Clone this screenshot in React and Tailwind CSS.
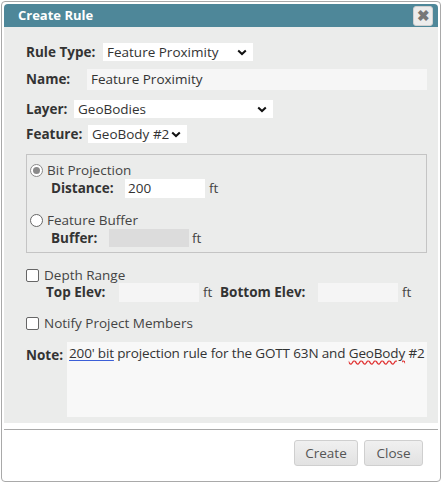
import React from 'react'

const Chevron = ({ className }) => (
  <svg width="10" height="7" viewBox="0 0 10 7" className={className}>
    <path d="M1.2 1.4 L5 5 L8.8 1.4" fill="none" stroke="#111" strokeWidth="2" />
  </svg>
)

function Select({ value, className }) {
  return (
    <div className={`flex items-center justify-between bg-white pl-[4px] pr-[6px] text-[#333] ${className}`}>
      <span>{value}</span>
      <Chevron />
    </div>
  )
}

const Radio = ({ checked }) =>
  checked ? (
    <span className="flex h-[13px] w-[13px] items-center justify-center rounded-full border border-[#8a8a8a] bg-white">
      <span className="h-[7px] w-[7px] rounded-full bg-[#8a8a8a]" />
    </span>
  ) : (
    <span className="h-[13px] w-[13px] rounded-full border border-[#666] bg-white" />
  )

const Checkbox = () => <span className="h-[13px] w-[13px] rounded-[2px] border border-[#666] bg-white" />

export default function App() {
  return (
    <div className="h-[482px] w-[442px] bg-white pl-px pt-px" style={{ fontFamily: '"Open Sans", "Liberation Sans", sans-serif' }}>
      <div className="flex h-[481px] w-[440px] flex-col rounded-[4px] border border-[#a9a9a9] bg-white p-[2px] text-[13.5px] text-[#444]">
        {/* title bar */}
        <div className="flex h-[23px] items-center justify-between rounded-t-[4px] bg-[#4e8799] pl-[14px] pr-[5px]">
          <span className="text-[13px] font-bold text-white">Create Rule</span>
          <span className="flex h-[20px] w-[20px] items-center justify-center rounded-[3px] border border-[#d0d0d0] bg-[#ececec] text-[15px] font-bold leading-none text-[#777]">
            ✖
          </span>
        </div>

        {/* content */}
        <div className="flex h-[396px] flex-col bg-[#ebeceb] pl-[22px] pr-[11px] pt-[16px]">
          <div className="flex h-[18px] items-center">
            <span className="w-[77px] font-bold text-[#333]">Rule Type:</span>
            <Select value="Feature Proximity" className="h-[18px] w-[150px]" />
          </div>

          <div className="mt-[8px] flex h-[21px] items-center">
            <span className="w-[61px] font-bold text-[#333]">Name:</span>
            <div className="flex h-[21px] flex-1 items-center bg-[#f6f6f6] pl-[4px] text-[#333]">Feature Proximity</div>
          </div>

          <div className="mt-[10px] flex h-[18px] items-center">
            <span className="w-[48px] font-bold text-[#333]">Layer:</span>
            <Select value="GeoBodies" className="h-[18px] w-[199px]" />
          </div>

          <div className="mt-[7px] flex h-[18px] items-center">
            <span className="w-[62px] font-bold text-[#333]">Feature:</span>
            <Select value="GeoBody #2" className="h-[18px] w-[99px]" />
          </div>

          {/* projection fieldset */}
          <div className="mt-[11px] flex h-[99px] flex-col border border-[#c4c4c4] pl-[3px] pt-[8px]">
            <div className="flex h-[14px] items-center gap-[4px]">
              <Radio checked />
              <span>Bit Projection</span>
            </div>
            <div className="mt-[2px] flex h-[19px] items-center pl-[21px]">
              <span className="w-[74px] font-bold text-[#333]">Distance:</span>
              <div className="flex h-[19px] w-[80px] items-center bg-white pl-[3px] text-[#333]">200</div>
              <span className="ml-[4px]">ft</span>
            </div>
            <div className="mt-[15px] flex h-[14px] items-center gap-[4px]">
              <Radio />
              <span>Feature Buffer</span>
            </div>
            <div className="mt-[2px] flex h-[18px] items-center pl-[21px]">
              <span className="w-[58px] font-bold text-[#333]">Buffer:</span>
              <div className="h-[18px] w-[80px] bg-[#dcdcdc]" />
              <span className="ml-[3px]">ft</span>
            </div>
          </div>

          {/* depth range */}
          <div className="mt-[15px] flex h-[14px] items-center gap-[5px]">
            <Checkbox />
            <span>Depth Range</span>
          </div>
          <div className="mt-[1px] flex h-[19px] items-center pl-[20px]">
            <span className="w-[73px] font-bold text-[#333]">Top Elev:</span>
            <div className="h-[19px] w-[80px] bg-[#f5f5f5]" />
            <span className="ml-[4px] w-[17px]">ft</span>
            <span className="w-[98px] font-bold text-[#333]">Bottom Elev:</span>
            <div className="h-[19px] w-[80px] bg-[#f5f5f5]" />
            <span className="ml-[4px]">ft</span>
          </div>

          <div className="mt-[14px] flex h-[14px] items-center gap-[5px]">
            <Checkbox />
            <span>Notify Project Members</span>
          </div>

          {/* note */}
          <div className="mt-[12px] flex">
            <span className="mt-[3px] w-[41px] font-bold text-[#333]">Note:</span>
            <div className="h-[75px] flex-1 whitespace-nowrap bg-[#f8f8f8] pl-[2px] pt-[2px] leading-[18px] tracking-[-0.15px] text-[#333]">
              <span className="underline decoration-[#3b5fd8] underline-offset-2">200' bit</span> projection rule for the GOTT 63N and{' '}
              <span className="underline decoration-[#e03030] decoration-wavy underline-offset-2">GeoBody</span> #2
            </div>
          </div>
        </div>

        {/* footer */}
        <div className="mt-[6px] border-t border-[#a9a9a9]" />
        <div className="mt-[10px] flex justify-end gap-[6px] pr-[15px]">
          <button className="h-[26px] w-[64px] rounded-[3px] border border-[#cfcfcf] bg-gradient-to-b from-[#f0f0f0] to-[#e2e2e2] text-[13.5px] text-[#555]">
            Create
          </button>
          <button className="h-[26px] w-[59px] rounded-[3px] border border-[#cfcfcf] bg-gradient-to-b from-[#f0f0f0] to-[#e2e2e2] text-[13.5px] text-[#555]">
            Close
          </button>
        </div>
      </div>
    </div>
  )
}
